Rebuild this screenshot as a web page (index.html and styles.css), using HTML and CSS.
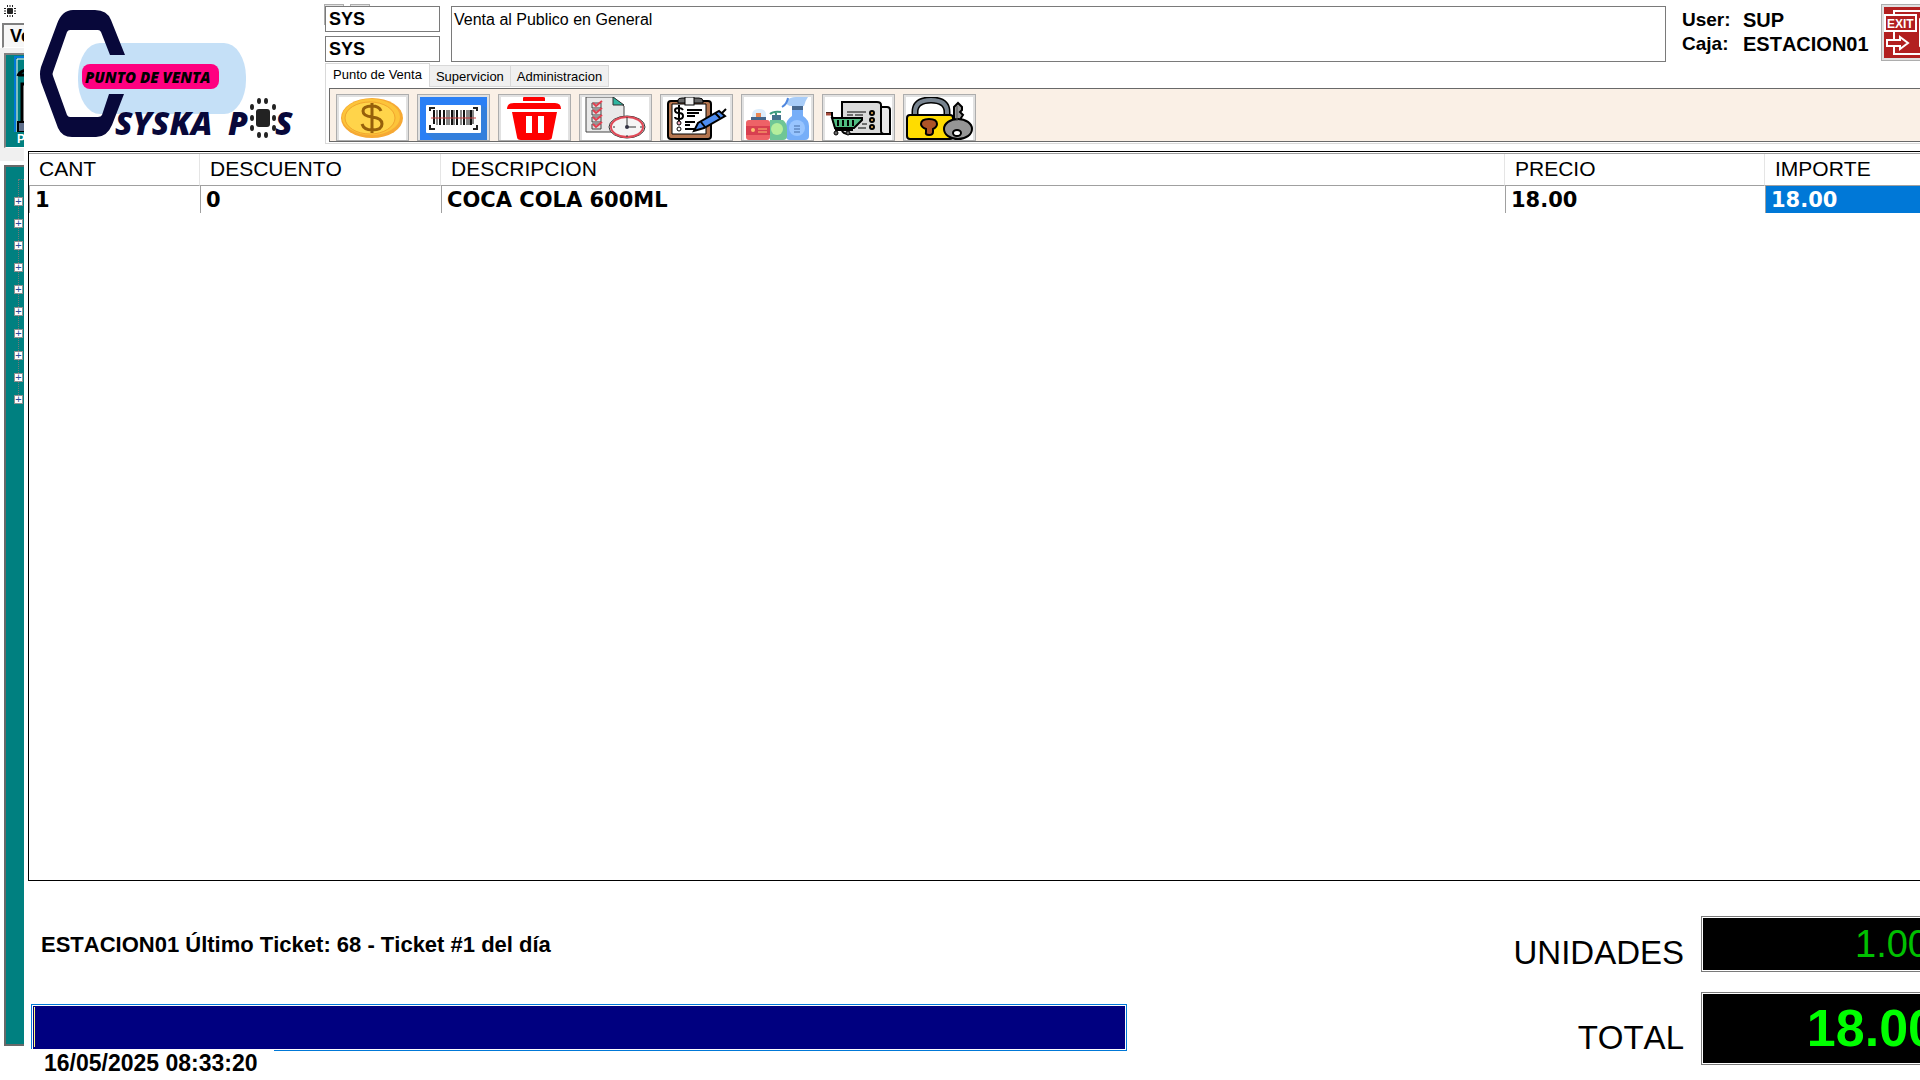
FILE: index.html
```html
<!DOCTYPE html>
<html lang="es">
  <head>
    <meta charset="UTF-8" />
    <meta name="viewport" content="width=device-width, initial-scale=1.0" />
    <title>SYSKA POS - Punto de Venta</title>
    <link rel="stylesheet" href="styles.css">
  </head>
  <body>
    <!-- main window, mostly covered by the sales form -->
    <aside class="back-window">
      <div class="back-title">
        <svg width="12" height="12" viewBox="0 0 12 12">
          <rect x="3" y="3" width="6" height="6" rx="1" fill="#222" />
          <path d="M3.500 0v2M6 0v2M8.500 0v2M3.500 10v2M6 10v2M8.500 10v2M0 3.500h2M0 6h2M0 8.500h2M10 3.500h2M10 6h2M10 8.500h2" stroke="#222" />
        </svg>
      </div>
      <button class="back-tab">Ve</button>
      <div class="back-tools">
        <button class="back-tool">
          <svg width="24" height="76" viewBox="0 0 24 76">
            <path d="M9 76V1h15" fill="none" stroke="#0078d7" stroke-width="2" />
            <path d="M11 76V3h13" fill="none" stroke="#fff" />
            <path d="M12 20q1-5 12-7M12 19h12" fill="none" stroke="#000" stroke-width="3" />
            <path d="M16 28h8v38h-8z" fill="#fff" />
            <path d="M24 28h-8v38" fill="none" stroke="#000" stroke-width="3" />
            <path d="M12 66h12v10H12z" fill="#60708c" stroke="#000" stroke-width="2" />
          </svg>
          <span>P</span>
        </button>
      </div>
      <div class="back-tree">
        <ul>
          <li><button>+</button></li>
          <li><button>+</button></li>
          <li><button>+</button></li>
          <li><button>+</button></li>
          <li><button>+</button></li>
          <li><button>+</button></li>
          <li><button>+</button></li>
          <li><button>+</button></li>
          <li><button>+</button></li>
          <li><button>+</button></li>
        </ul>
      </div>
    </aside>

    <main class="pos">
      <header class="top">
        <svg class="logo" viewBox="36 0 264 145">
          <rect x="78" y="43" width="168" height="71" rx="22" ry="34" fill="#c5e0f7" />
          <path fill="#08083a" d="M110 55 101 32Q100 30 98 30H70Q68 30 67 32L53 72Q52 74 53 76L67 115Q68 117 70 117H98Q101 117 102 115L109 94H124L112 125Q107 137 96 137H72Q62 137 58 128L41 82Q39 74 41 67L57 24Q62 10 73 10H95Q107 10 111 20L125 55Z" />
          <rect x="82" y="64" width="137" height="25" rx="8" fill="#ff0080" />
          <text class="logo-small" x="85" y="83">PUNTO DE VENTA</text>
          <text class="logo-big" x="115" y="135">SYSKA</text>
          <text class="logo-big" x="228" y="135">P</text>
          <text class="logo-big" x="275" y="135">S</text>
          <g fill="#222">
            <rect x="256" y="109" width="14" height="18" rx="3" />
            <ellipse cx="259" cy="101" rx="2" ry="3" /><ellipse cx="266" cy="101" rx="2" ry="3" />
            <ellipse cx="252" cy="107" rx="2" ry="3" /><ellipse cx="274" cy="107" rx="2" ry="3" />
            <ellipse cx="252" cy="118" rx="2" ry="3" /><ellipse cx="274" cy="118" rx="2" ry="3" />
            <ellipse cx="252" cy="128" rx="2" ry="3" /><ellipse cx="274" cy="128" rx="2" ry="3" />
            <ellipse cx="259" cy="135" rx="2" ry="3" /><ellipse cx="266" cy="135" rx="2" ry="3" />
          </g>
        </svg>

        <div class="top-right">
          <div class="fields">
            <div class="codes">
              <input type="text" value="SYS" aria-label="Cliente" />
              <input type="text" value="SYS" aria-label="Vendedor" />
            </div>
            <textarea class="customer" aria-label="Nombre del cliente">Venta al Publico en General</textarea>
            <dl class="session">
              <dt>User:</dt>
              <dd>SUP</dd>
              <dt>Caja:</dt>
              <dd>ESTACION01</dd>
            </dl>
            <button class="icon-btn exit" aria-label="Salir">
              <svg width="67" height="51" viewBox="0 0 67 51">
                <path d="M0 0h67v51H0z" fill="#b22020" />
                <path d="M10 8V4h47v43H10V25" fill="none" stroke="#fff" stroke-width="2" />
                <path d="M36 12l14-8v43l-14-8z" fill="#b22020" stroke="#fff" stroke-width="2" />
                <path d="M1 8h31v16H1z" fill="#b22020" stroke="#fff" stroke-width="2" />
                <text class="exit-text" x="3" y="21">EXIT</text>
                <path d="M3 33h13v-3l8 6-8 6v-3H3z" fill="#b22020" stroke="#fff" stroke-width="2" />
              </svg>
            </button>
          </div>

          <nav class="tabs">
            <button class="tab active">Punto de Venta</button>
            <button class="tab">Supervicion</button>
            <button class="tab">Administracion</button>
          </nav>
          <div class="tab-page">
            <div class="toolbar">
              <button class="icon-btn" aria-label="Cobrar">
                <svg width="67" height="43" viewBox="0 0 67 43">
                  <ellipse cx="33" cy="21" rx="31" ry="20" fill="#f6a934" />
                  <ellipse cx="32" cy="20" rx="29" ry="18" fill="#fcc43a" />
                  <ellipse cx="31" cy="21" rx="25" ry="16" fill="#ffd44a" stroke="#f1a52d" />
                  <path d="M42 14q-2-5-9-5-9 0-9 5 0 5 9 6 10 1 10 7 0 6-10 6-8 0-10-6M33 6v30" fill="none" stroke="#96600b" stroke-width="3" />
                </svg>
              </button>
              <button class="icon-btn" aria-label="Codigo de barras">
                <svg width="67" height="43" viewBox="0 0 67 43">
                  <path d="M0 0h67v43H0z" fill="#2a7ff5" />
                  <path d="M6 36l55-28 6 3v32H14z" fill="#337fdc" />
                  <rect x="6" y="8" width="55" height="28" rx="1" fill="#fff" />
                  <path d="M10 14v-3h5M53 11h4v3M10 28v4h5M53 32h4v-4" fill="none" stroke="#222" stroke-width="2" />
                  <path d="M14 13v14M20 13v15M24 13v15M32 13v15M37 13v15M44 13v15M51 13v15" stroke="#111" stroke-width="2" />
                  <path d="M17 13v15M27 13v15M29 13v15M34 13v15M41 13v15M47 13v15M49 13v15M53 13v14" stroke="#111" />
                  <path d="M11 21h45" stroke="#c84040" />
                </svg>
              </button>
              <button class="icon-btn" aria-label="Eliminar">
                <svg width="67" height="43" viewBox="0 0 67 43">
                  <g fill="#f00">
                    <path d="M22 4V1q0-1 1-1h19q2 0 2 1v3z" />
                    <path d="M6 12q0-6 7-6h41q6 0 6 6z" />
                    <path d="M11 15h45l-5 25q0 3-4 3H20q-4 0-4-3z" />
                  </g>
                  <path d="M25 19h6v17h-6zM37 19h6v17h-6z" fill="#fff" />
                </svg>
              </button>
              <button class="icon-btn" aria-label="Pedidos pendientes">
                <svg width="67" height="43" viewBox="0 0 67 43">
                  <path d="M4 0h27l11 9v26H4z" fill="#e9e9e9" stroke="#444" />
                  <path d="M31 0v8h11z" fill="#2fb5a0" stroke="#333" />
                  <path d="M10 6h9v5h-9zM10 13h9v5h-9zM10 20h9v5h-9zM10 27h9v5h-9z" fill="#ddd" stroke="#444" />
                  <path d="M11 6l3 3 6-5M11 13l3 3 6-5M11 20l3 3 6-5M11 27l3 3 6-5" fill="none" stroke="#e04050" stroke-width="2" />
                  <ellipse cx="45" cy="30" rx="18" ry="11" fill="#eee" stroke="#333" />
                  <ellipse cx="45" cy="30" rx="16" ry="10" fill="#f5f5f5" stroke="#e04a58" stroke-width="2" />
                  <path d="M45 22v8h9M45 20v2M45 38v2M31 30h2M58 30h2" fill="none" stroke="#333" />
                  <circle cx="45" cy="30" r="2" fill="#334" />
                </svg>
              </button>
              <button class="icon-btn" aria-label="Cotizacion">
                <svg width="67" height="43" viewBox="0 0 67 43">
                  <rect x="5" y="4" width="43" height="38" rx="3" fill="#b57650" stroke="#000" stroke-width="2" />
                  <path d="M9 7h34v30H9z" fill="#fff" stroke="#000" />
                  <path d="M15 3q0-2 4-2h17q4 0 4 3v2H15z" fill="#666" stroke="#000" />
                  <rect x="22" y="0" width="9" height="8" fill="#eee" stroke="#000" />
                  <path d="M20 13q-1-2-4-2-4 0-4 2 0 3 4 3t4 3q0 3-4 3t-4-2M16 8v16M24 13h15M24 16h12M24 19h8M22 25h10M22 28h5M22 32h10" fill="none" stroke="#000" stroke-width="2" />
                  <circle cx="16" cy="26" r="2" fill="#eab" stroke="#000" /><circle cx="16" cy="32" r="2" fill="#fff" stroke="#000" />
                  <path d="M31 34l4-8 21-12 6 5-21 12z" fill="#4e8df0" stroke="#000" stroke-width="2" />
                  <path d="M38 25l4 5M52 16l5 5M59 16l4-4" stroke="#000" stroke-width="2" />
                </svg>
              </button>
              <button class="icon-btn" aria-label="Productos">
                <svg width="67" height="43" viewBox="0 0 67 43">
                  <path d="M42 4q4-4 10-4h12q-3 4-4 9H48q-6 0-6-5z" fill="#a9cdf8" />
                  <path d="M38 10q5-3 6-9" fill="none" stroke="#4f87df" stroke-width="2" />
                  <path d="M48 9h11v5H48z" fill="#47688f" />
                  <path d="M48 13h11v6q6 4 6 10v10q0 4-4 4H46q-4 0-4-4V29q0-6 6-10z" fill="#76aef8" />
                  <circle cx="53" cy="31" r="8" fill="#98c5ff" />
                  <path d="M50 29h6M50 32h6M50 35h6" stroke="#456ca5" />
                  <path d="M26 17q3-3 11-2M32 15v6" fill="none" stroke="#3c9a7d" stroke-width="2" />
                  <path d="M28 18h9v5h-9z" fill="#45738d" />
                  <path d="M26 23h13q4 3 4 9v7q0 4-4 4H26z" fill="#6fc696" />
                  <circle cx="33" cy="32" r="6" fill="#b5ee9c" />
                  <path d="M8 22v-4q0-6 7-6t7 6v4z" fill="#dcecfb" />
                  <path d="M12 16h5v5h-5z" fill="#e98552" />
                  <path d="M7 20h15v4H7z" fill="#43658b" />
                  <rect x="2" y="23" width="24" height="20" rx="3" fill="#ee6267" />
                  <path d="M2 29h24v9H2z" fill="#d83f50" />
                  <circle cx="9" cy="33" r="2" fill="#ffbd70" />
                  <path d="M14 32h9M14 35h9" stroke="#ffbd70" />
                </svg>
              </button>
              <button class="icon-btn" aria-label="Ventas">
                <svg width="67" height="43" viewBox="0 0 67 43">
                  <path d="M56 10h6q3 0 3 3v24H54" fill="#e9e9e9" stroke="#000" stroke-width="2" />
                  <path d="M17 16V5h35q4 0 4 3v26q0 3 4 3H25q-8 0-8-4z" fill="#dadada" stroke="#000" stroke-width="2" />
                  <path d="M22 15h19M22 18h6M30 18h8M37 27h5M33 31h8" stroke="#000" />
                  <g fill="#f5b458" stroke="#000" stroke-width="2"><circle cx="47" cy="16" r="2" /><circle cx="47" cy="23" r="2" /><circle cx="47" cy="30" r="2" /></g>
                  <path d="M1 16h6v3l4 14h17" fill="none" stroke="#000" stroke-width="2" />
                  <path d="M1 17h5" stroke="#a54c3c" stroke-width="3" />
                  <path d="M7 21h30v2l-8 8H10z" fill="#51bd83" stroke="#000" stroke-width="2" />
                  <path d="M13 23v6M18 23v6M23 23v6M28 23v6" stroke="#000" stroke-width="2" />
                  <circle cx="11" cy="36" r="2" fill="#666" stroke="#000" /><circle cx="23" cy="36" r="2" fill="#666" stroke="#000" />
                </svg>
              </button>
              <button class="icon-btn" aria-label="Bloquear caja">
                <svg width="67" height="43" viewBox="0 0 67 43">
                  <path d="M9 19v-4Q9 3 25 3t16 12v4" fill="none" stroke="#000" stroke-width="7" />
                  <path d="M9 20v-5Q9 3 25 3t16 12v5" fill="none" stroke="#77838f" stroke-width="4" />
                  <rect x="1" y="18" width="46" height="24" rx="3" fill="#ffdc00" stroke="#000" stroke-width="2" />
                  <path d="M20 32q-5-2-5-5 0-5 8-5t8 5q0 3-4 5v3q0 3-4 3t-3-3z" fill="#ad5428" stroke="#000" stroke-width="2" />
                  <path d="M48 25V10l4-4 4 4v3l-2 2 3 3-2 3v6" fill="#999" stroke="#000" stroke-width="2" />
                  <ellipse cx="52" cy="32" rx="14" ry="10" fill="#969696" stroke="#000" stroke-width="2" />
                  <path d="M51 9v15" stroke="#555" />
                  <ellipse cx="51" cy="36" rx="4" ry="3" fill="#fff" stroke="#000" stroke-width="2" />
                </svg>
              </button>
            </div>
          </div>
        </div>
      </header>

      <section class="sale">
        <table>
          <thead>
            <tr>
              <th class="col-cant">CANT</th>
              <th class="col-desc">DESCUENTO</th>
              <th>DESCRIPCION</th>
              <th class="col-precio">PRECIO</th>
              <th class="col-importe">IMPORTE</th>
            </tr>
          </thead>
          <tbody>
            <tr>
              <td>1</td>
              <td>0</td>
              <td>COCA COLA 600ML</td>
              <td>18.00</td>
              <td class="selected">18.00</td>
            </tr>
          </tbody>
        </table>
      </section>

      <footer class="bottom">
        <div class="entry">
          <p class="ticket">ESTACION01 Último Ticket: 68 - Ticket #1 del día</p>
          <input class="code" type="text" aria-label="Codigo del producto" />
          <time class="clock">16/05/2025 08:33:20</time>
        </div>
        <div class="totals">
          <label for="unidades">UNIDADES</label>
          <output id="unidades" class="led">1.00</output>
          <label for="total">TOTAL</label>
          <output id="total" class="led led-total">18.00</output>
        </div>
      </footer>
    </main>
  </body>
</html>
```
FILE: styles.css
```css
* {
  box-sizing: border-box;
}
body {
  display: flex;
  height: 100vh;
  margin: 0;
  overflow: hidden;
  background: #fff;
  color: #000;
  font-family: "Liberation Sans", Arial, sans-serif;
  font-kerning: none;
}
button,
input,
textarea {
  border-radius: 0;
  font-family: inherit;
}

/* window behind */
.back-window {
  display: flex;
  flex-direction: column;
  flex: 0 0 24px;
  padding-bottom: 34px;
  overflow: hidden;
}
.back-title {
  height: 23px;
  padding: 5px 4px;
}
.back-title svg {
  display: block;
}
.back-tab {
  height: 25px;
  width: 60px;
  margin-left: 2px;
  padding: 0 6px;
  border: 2px solid #808080;
  border-bottom: 1px solid #fff;
  background: #f7f7f7;
  font-size: 18px;
  font-weight: bold;
  text-align: left;
}
.back-tools {
  height: 113px;
  padding: 5px 0 0 4px;
  background: #f0f0f0;
}
.back-tool {
  display: block;
  width: 60px;
  height: 95px;
  padding: 0;
  border: 2px solid #808080;
  border-bottom: 1px solid #fff;
  background: #008080;
  color: #fff;
  font-size: 12px;
  font-weight: bold;
  line-height: 14px;
  text-align: left;
}
.back-tool svg {
  display: block;
}
.back-tool span {
  padding-left: 11px;
}
.back-tree {
  flex: 1;
  margin: 4px 0 0 4px;
  padding: 12px 0 0 8px;
  border: 2px solid #696969;
  border-right: none;
  background: #008080;
}
.back-tree ul {
  height: 220px;
  margin: 0 0 0 4px;
  padding: 17px 0 0;
  border-left: 1px dotted #777;
  border-top: 1px dotted #777;
  list-style: none;
}
.back-tree li {
  height: 22px;
  margin-left: -5px;
}
.back-tree button {
  display: block;
  width: 9px;
  height: 9px;
  padding: 0;
  border: 1px solid #919191;
  background: #fff;
  color: #2b4a9b;
  font-size: 11px;
  line-height: 7px;
}

/* the form is wider than the screen */
.pos {
  display: flex;
  flex: 1;
  flex-direction: column;
  min-width: 0;
  margin-right: -34px;
  padding-left: 4px;
}
.top {
  display: flex;
  height: 151px;
  padding-left: 8px;
  gap: 25px;
}
.logo {
  flex: none;
  width: 264px;
  height: 145px;
}
.logo text {
  font-family: "Open Sans", sans-serif;
  font-style: italic;
  font-weight: 800;
}
.logo .logo-small {
  font-size: 15px;
}
.logo .logo-big {
  fill: #08083a;
  font-size: 32px;
}
.top-right {
  flex: 1;
  min-width: 0;
}
.fields {
  display: flex;
  height: 63px;
  padding-top: 6px;
}
.codes {
  position: relative;
  display: flex;
  flex-direction: column;
  gap: 4px;
  margin-right: 11px;
}
/* buttons hidden under the first field */
.codes::before,
.codes::after {
  content: "";
  position: absolute;
  z-index: -1;
  top: -2px;
  left: -1px;
  width: 18px;
  height: 19px;
  border: 1px solid #adadad;
  background: #e1e1e1;
}
.codes::after {
  left: 25px;
}
.codes input {
  width: 115px;
  height: 26px;
  padding: 0 3px;
  border: 1px solid #7a7a7a;
  font-size: 18px;
  font-weight: bold;
}
.customer {
  flex: 1;
  height: 56px;
  padding: 4px 2px;
  border: 1px solid #7a7a7a;
  font-size: 16px;
  line-height: 18px;
  resize: none;
}
.session {
  display: grid;
  grid-template-columns: 61px 138px;
  grid-auto-rows: 24px;
  margin: 0 0 0 16px;
  font-size: 20px;
  font-weight: bold;
  line-height: 28px;
}
.session dt {
  font-size: 19px;
}
.session dd {
  margin: 0;
}
.icon-btn {
  flex: none;
  width: 73px;
  padding: 2px;
  border: 1px solid #adadad;
  background: #e1e1e1;
}
.icon-btn svg {
  display: block;
  background: #fff;
}
.exit {
  height: 57px;
  margin-top: -2px;
}
.exit-text {
  fill: #fff;
  font-size: 12px;
  font-weight: bold;
}

/* tabs */
.tabs {
  display: flex;
  align-items: flex-end;
  height: 24px;
}
.tab {
  height: 22px;
  padding: 0 6px;
  border: 1px solid #d9d9d9;
  border-left: none;
  background: #f0f0f0;
  font-size: 13px;
}
.tab.active {
  height: 24px;
  padding: 0 7px 3px;
  border-left: 1px solid #d9d9d9;
  border-bottom: none;
  background: #fff;
}
.tab-page {
  padding: 1px 0 1px 3px;
  border: 1px solid #d9d9d9;
  border-top: none;
}
.toolbar {
  display: flex;
  gap: 8px;
  height: 54px;
  padding: 5px 6px 0;
  border: 1px solid #696969;
  background: #faf0e6;
  overflow: hidden;
}

/* products */
.sale {
  flex: 1;
  border: 1px solid #000;
  padding-top: 1px;
}
table {
  width: 100%;
  border-collapse: separate;
  border-spacing: 0;
  table-layout: fixed;
  border-top: 1px solid #a0a0a0;
}
.col-cant {
  width: 171px;
}
.col-desc {
  width: 241px;
}
.col-precio {
  width: 260px;
}
.col-importe {
  width: 188px;
}
th {
  height: 32px;
  padding: 0 10px 2px;
  border-right: 1px solid #e5e5e5;
  border-bottom: 1px solid #a0a0a0;
  font-size: 21px;
  font-weight: normal;
  line-height: 24px;
  text-align: left;
}
td {
  height: 27px;
  padding: 1px 5px 0;
  border-left: 1px solid #a0a0a0;
  font-family: "DejaVu Sans", Verdana, sans-serif;
  font-size: 21px;
  font-weight: bold;
  line-height: 26px;
}
.selected {
  background: #0078d7;
  color: #fff;
}

/* totals */
.bottom {
  display: flex;
  justify-content: space-between;
  height: 199px;
  padding: 35px 0 0 3px;
}
.entry {
  display: flex;
  flex-direction: column;
  align-items: flex-start;
  width: 57%;
}
.ticket {
  margin: 17px 0 47px 10px;
  font-size: 22px;
  font-weight: bold;
  line-height: 24px;
}
.code {
  flex: none;
  width: 100%;
  height: 47px;
  padding: 0 4px;
  border: 1px solid #0078d7;
  background: linear-gradient(#ffff80, #ffff80) 2px 2px / 1px 40px no-repeat #000080;
  box-shadow: inset 0 0 0 1px #fff;
  color: #fff;
  font-size: 24px;
}
.clock {
  z-index: 1;
  width: 243px;
  margin-top: -2px;
  padding-left: 13px;
  background: #fff;
  font-size: 23px;
  font-weight: bold;
  line-height: 28px;
}
.totals {
  display: grid;
  grid-template-columns: auto 253px;
  grid-template-rows: 56px 73px;
  align-items: center;
  column-gap: 17px;
  row-gap: 20px;
}
.totals label {
  padding-top: 18px;
  font-size: 33px;
  line-height: 38px;
  text-align: right;
}
.led {
  height: 100%;
  padding: 0 24px 0 0;
  border: 1px solid #7a7a7a;
  background: #000;
  box-shadow: inset 0 0 0 1px #fff;
  color: #00c000;
  font-size: 38px;
  line-height: 54px;
  text-align: right;
}
.led-total {
  padding-right: 16px;
  color: #0f0;
  font-size: 52px;
  font-weight: bold;
  line-height: 70px;
}
```
